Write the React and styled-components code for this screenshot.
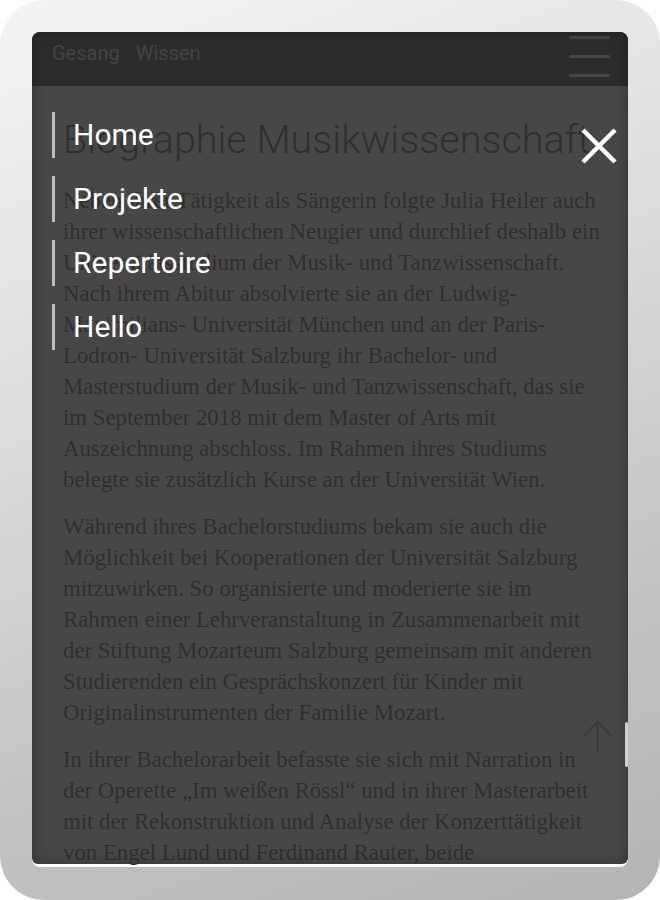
import React from "react"
import styled, { createGlobalStyle } from "styled-components"

const GlobalStyle = createGlobalStyle`
  html, body {
    margin: 0;
    padding: 0;
    background: #ffffff;
  }
  * {
    box-sizing: border-box;
  }
`

const Frame = styled.div`
  width: 660px;
  height: 900px;
  padding: 32px 32px 33px;
  border-radius: 44px;
  background: linear-gradient(160deg, #f4f4f4 0%, #e2e2e2 30%, #c4c4c4 70%, #b4b4b4 100%);
`

const Screen = styled.div`
  position: relative;
  height: 100%;
  border-radius: 8px;
  overflow: hidden;
  background: #ffffff;
`

const Header = styled.header`
  display: flex;
  justify-content: space-between;
  align-items: flex-start;
  height: 54px;
  padding: 0 18px 0 20px;
  background: #111111;
  box-shadow: 0 1px 0 rgba(255, 255, 255, 0.15);
`

const Nav = styled.nav`
  display: flex;
  gap: 16px;
  padding-top: 9px;
`

const NavLink = styled.a`
  font-family: Roboto, "Noto Sans", sans-serif;
  font-size: 20px;
  color: #d4d4d4;
  text-decoration: none;
`

const Burger = styled.div`
  display: flex;
  flex-direction: column;
  gap: 16px;
  padding-top: 4px;
`

const BurgerLine = styled.span`
  display: block;
  width: 41px;
  height: 3px;
  border-radius: 2px;
  background: #ffffff;
`

const Article = styled.article`
  padding: 30px 31px 0;
  color: #1c1c1c;
`

const Title = styled.h1`
  margin: 0 0 21px;
  font-family: Roboto, "Noto Sans", sans-serif;
  font-weight: 300;
  font-size: 39.5px;
  line-height: 48px;
  white-space: nowrap;
`

const Paragraph = styled.p`
  margin: 0 0 16px;
  font-family: "Liberation Serif", "Times New Roman", serif;
  font-size: 22.8px;
  line-height: 31px;
`

const Line = styled.span`
  display: block;
  white-space: nowrap;
`

const ScrollUp = styled.button`
  position: absolute;
  right: 15px;
  bottom: 113px;
  width: 31px;
  height: 34px;
  padding: 0;
  border: 0;
  background: none;
  color: #888888;
`

const Overlay = styled.div`
  position: absolute;
  top: 0;
  left: 0;
  right: 0;
  bottom: 3px;
  padding: 80px 20px 0;
  border-radius: 8px 8px 6px 6px;
  background: rgba(48, 48, 48, 0.89);
  box-shadow: inset 0 0 14px rgba(0, 0, 0, 0.28);
`

const Menu = styled.ul`
  display: flex;
  flex-direction: column;
  gap: 18px;
  margin: 0;
  padding: 0;
  list-style: none;
`

const MenuItem = styled.li`
  height: 46px;
  padding-left: 18px;
  border-left: 3px solid #bdbdbd;
  font-family: Roboto, "Noto Sans", sans-serif;
  font-size: 30px;
  line-height: 46px;
  color: #ffffff;
`

const Close = styled.button`
  position: absolute;
  top: 95px;
  right: 10px;
  width: 38px;
  height: 38px;
  padding: 0;
  border: 0;
  background: none;
  color: #ffffff;
`

const Thumb = styled.div`
  position: absolute;
  top: 690px;
  right: 0;
  width: 3px;
  height: 45px;
  border-radius: 2px;
  background: #d0d0d0;
`

const paragraphs = [
  [
    "Neben ihrer Tätigkeit als Sängerin folgte Julia Heiler auch",
    "ihrer wissenschaftlichen Neugier und durchlief deshalb ein",
    "Universitätsstudium der Musik- und Tanzwissenschaft.",
    "Nach ihrem Abitur absolvierte sie an der Ludwig-",
    "Maximilians- Universität München und an der Paris-",
    "Lodron- Universität Salzburg ihr Bachelor- und",
    "Masterstudium der Musik- und Tanzwissenschaft, das sie",
    "im September 2018 mit dem Master of Arts mit",
    "Auszeichnung abschloss. Im Rahmen ihres Studiums",
    "belegte sie zusätzlich Kurse an der Universität Wien.",
  ],
  [
    "Während ihres Bachelorstudiums bekam sie auch die",
    "Möglichkeit bei Kooperationen der Universität Salzburg",
    "mitzuwirken. So organisierte und moderierte sie im",
    "Rahmen einer Lehrveranstaltung in Zusammenarbeit mit",
    "der Stiftung Mozarteum Salzburg gemeinsam mit anderen",
    "Studierenden ein Gesprächskonzert für Kinder mit",
    "Originalinstrumenten der Familie Mozart.",
  ],
  [
    "In ihrer Bachelorarbeit befasste sie sich mit Narration in",
    "der Operette „Im weißen Rössl“ und in ihrer Masterarbeit",
    "mit der Rekonstruktion und Analyse der Konzerttätigkeit",
    "von Engel Lund und Ferdinand Rauter, beide",
  ],
]

const menu = ["Home", "Projekte", "Repertoire", "Hello"]

const App = () => {
  return (
    <>
      <GlobalStyle />
      <Frame>
        <Screen>
          <Header>
            <Nav>
              <NavLink href="#">Gesang</NavLink>
              <NavLink href="#">Wissen</NavLink>
            </Nav>
            <Burger>
              <BurgerLine />
              <BurgerLine />
              <BurgerLine />
            </Burger>
          </Header>

          <Article>
            <Title>Biographie Musikwissenschaft</Title>
            {paragraphs.map((lines, i) => (
              <Paragraph key={i}>
                {lines.map((line) => (
                  <Line key={line}>{line}</Line>
                ))}
              </Paragraph>
            ))}
          </Article>

          <ScrollUp aria-label="Nach oben">
            <svg width="31" height="34" viewBox="0 0 31 34" fill="none" stroke="currentColor" strokeWidth="2.2">
              <path d="M15.5 2 V33" />
              <path d="M1.5 16 L15.5 2 L29.5 16" />
            </svg>
          </ScrollUp>

          <Overlay>
            <Menu>
              {menu.map((item) => (
                <MenuItem key={item}>{item}</MenuItem>
              ))}
            </Menu>
            <Close aria-label="Schließen">
              <svg width="38" height="38" viewBox="0 0 38 38" stroke="currentColor" strokeWidth="4.5">
                <path d="M3 3 L35 35 M35 3 L3 35" />
              </svg>
            </Close>
          </Overlay>

          <Thumb />
        </Screen>
      </Frame>
    </>
  )
}

export default App
